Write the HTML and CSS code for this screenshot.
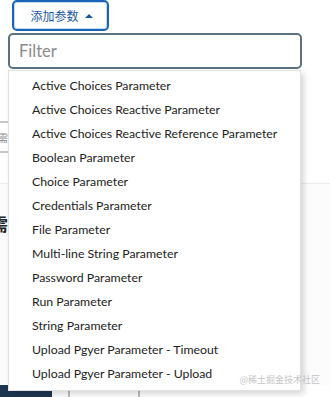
FILE: index.html
```html
<!DOCTYPE html>
<html>
<head>
<meta charset="utf-8">
<link rel="stylesheet" href="styles.css">
</head>
<body>
<div class="page">
  <div class="top">
    <button class="add-btn">添加参数 <span class="caret"></span></button>
  </div>
  <div class="tabs"><span class="tab-label">需</span></div>
  <div class="section">
    <div class="heading">需</div>
  </div>
  <div class="actions">
    <button class="save"></button>
    <button class="apply"></button>
  </div>

  <div class="popup">
    <input class="filter" type="text" placeholder="Filter">
    <ul class="menu">
      <li>Active Choices Parameter</li>
      <li>Active Choices Reactive Parameter</li>
      <li>Active Choices Reactive Reference Parameter</li>
      <li>Boolean Parameter</li>
      <li>Choice Parameter</li>
      <li>Credentials Parameter</li>
      <li>File Parameter</li>
      <li>Multi-line String Parameter</li>
      <li>Password Parameter</li>
      <li>Run Parameter</li>
      <li>String Parameter</li>
      <li>Upload Pgyer Parameter - Timeout</li>
      <li>Upload Pgyer Parameter - Upload</li>
    </ul>
  </div>
  <div class="watermark">@稀土掘金技术社区</div>
</div>
</body>
</html>
```
FILE: styles.css
```css
* { box-sizing: border-box; }
html, body {
  margin: 0;
  padding: 0;
  background: #fff;
  width: 330px;
  height: 397px;
  overflow: hidden;
  font-family: "Lato", "Noto Sans CJK SC", sans-serif;
}
.page {
  position: relative;
  width: 330px;
  height: 397px;
  overflow: hidden;
}
.top {
  padding-left: 12px;
  height: 121px;
}
.add-btn {
  width: 97px;
  height: 31px;
  margin-top: 0;
  border: 2px solid #1a63b8;
  border-radius: 5px;
  background: #fff;
  box-shadow: inset 0 0 0 1px #c4dbf2;
  color: #1757a0;
  font-family: "Noto Sans CJK SC", sans-serif;
  font-size: 12px;
  display: flex;
  align-items: center;
  justify-content: center;
  gap: 6px;
  padding: 0 0 0 2px;
}
.caret {
  width: 0;
  height: 0;
  border-left: 4px solid transparent;
  border-right: 4px solid transparent;
  border-bottom: 4px solid #1757a0;
}
.tabs {
  width: 200px;
  height: 32px;
  border-top: 2px solid #c8c8c8;
  border-bottom: 2px solid #c8c8c8;
  display: flex;
  align-items: center;
}
.tab-label {
  font-family: "Noto Sans CJK SC", sans-serif;
  font-size: 10px;
  color: #888;
  margin-left: -2px;
}
.section {
  margin-top: 30px;
  border-top: 1px solid #ececec;
  background: #fcfcfc;
  height: 202px;
  padding-top: 30px;
}
.heading {
  font-family: "Noto Sans CJK SC", sans-serif;
  font-weight: 700;
  font-size: 17px;
  color: #222;
  margin-left: -9px;
  line-height: 20px;
}
.actions {
  display: flex;
  gap: 16px;
}
.save {
  width: 52px;
  height: 30px;
  border: none;
  border-radius: 0 6px 0 0;
  background: #1e3550;
}
.apply {
  width: 72px;
  height: 30px;
  border: 2px solid #b9bec4;
  border-radius: 6px;
  background: #fff;
}
.popup {
  position: absolute;
  left: 8px;
  top: 33px;
  width: 294px;
}
.filter {
  display: block;
  width: 294px;
  height: 36px;
  border: 2px solid #5b7282;
  border-radius: 5px;
  padding: 0 9px;
  font-family: "Lato", sans-serif;
  font-size: 16.5px;
  color: #333;
  outline: none;
}
.filter::placeholder { color: #8a8a8a; }
.menu {
  list-style: none;
  margin: 1px 0 0 0;
  padding: 3px 0 4px 0;
  width: 293px;
  background: #fff;
  border: 1px solid #e2e2e2;
  box-shadow: 3px 3px 6px rgba(0,0,0,0.16);
}
.menu li {
  height: 24px;
  line-height: 24px;
  padding-left: 23px;
  font-size: 12.3px;
  color: #222;
  white-space: nowrap;
}
.watermark {
  position: absolute;
  right: 10px;
  bottom: 11px;
  font-family: "Noto Sans CJK SC", sans-serif;
  font-size: 9px;
  color: #c4c4c4;
}
```
